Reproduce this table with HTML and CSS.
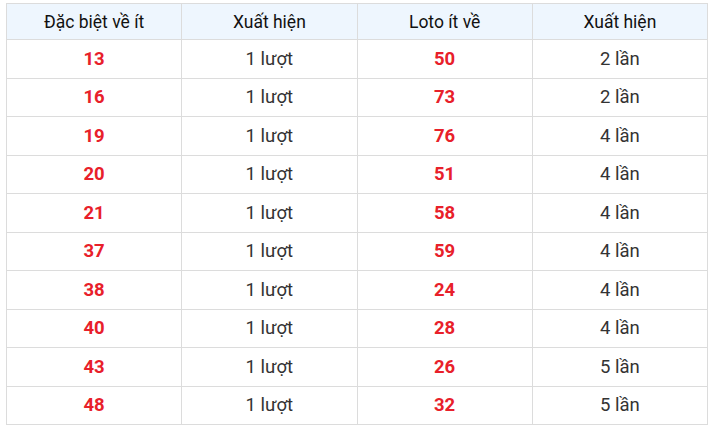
FILE: index.html
```html
<!DOCTYPE html>
<html lang="vi">
<head>
<meta charset="utf-8">
<link rel="stylesheet" href="styles.css">
</head>
<body>
<div class="wrap">
<table class="stats">
<thead>
<tr><th>Đặc biệt về ít</th><th>Xuất hiện</th><th>Loto ít về</th><th>Xuất hiện</th></tr>
</thead>
<tbody>
<tr><td class="num">13</td><td>1 lượt</td><td class="num">50</td><td>2 lần</td></tr>
<tr><td class="num">16</td><td>1 lượt</td><td class="num">73</td><td>2 lần</td></tr>
<tr><td class="num">19</td><td>1 lượt</td><td class="num">76</td><td>4 lần</td></tr>
<tr><td class="num">20</td><td>1 lượt</td><td class="num">51</td><td>4 lần</td></tr>
<tr><td class="num">21</td><td>1 lượt</td><td class="num">58</td><td>4 lần</td></tr>
<tr><td class="num">37</td><td>1 lượt</td><td class="num">59</td><td>4 lần</td></tr>
<tr><td class="num">38</td><td>1 lượt</td><td class="num">24</td><td>4 lần</td></tr>
<tr><td class="num">40</td><td>1 lượt</td><td class="num">28</td><td>4 lần</td></tr>
<tr><td class="num">43</td><td>1 lượt</td><td class="num">26</td><td>5 lần</td></tr>
<tr><td class="num">48</td><td>1 lượt</td><td class="num">32</td><td>5 lần</td></tr>
</tbody>
</table>
</div>
</body>
</html>
```
FILE: styles.css
```css
html, body {
  margin: 0;
  padding: 0;
  background: #fff;
}
.wrap {
  padding: 3px 6px 0 6px;
  width: 702px;
}
.stats {
  width: 702px;
  border-collapse: collapse;
  table-layout: fixed;
  font-family: Roboto, "Liberation Sans", Arial, sans-serif;
}
.stats th, .stats td {
  border: 1px solid #dcdcdc;
  text-align: center;
  padding: 0;
}
.stats th {
  height: 35px;
  background: #eef6fe;
  font-weight: 400;
  font-size: 17.5px;
  color: #111;
}
.stats td {
  height: 37.5px;
  font-size: 18.5px;
  color: #333;
}
.stats td.num {
  color: #e8202a;
  font-weight: 700;
}
```
